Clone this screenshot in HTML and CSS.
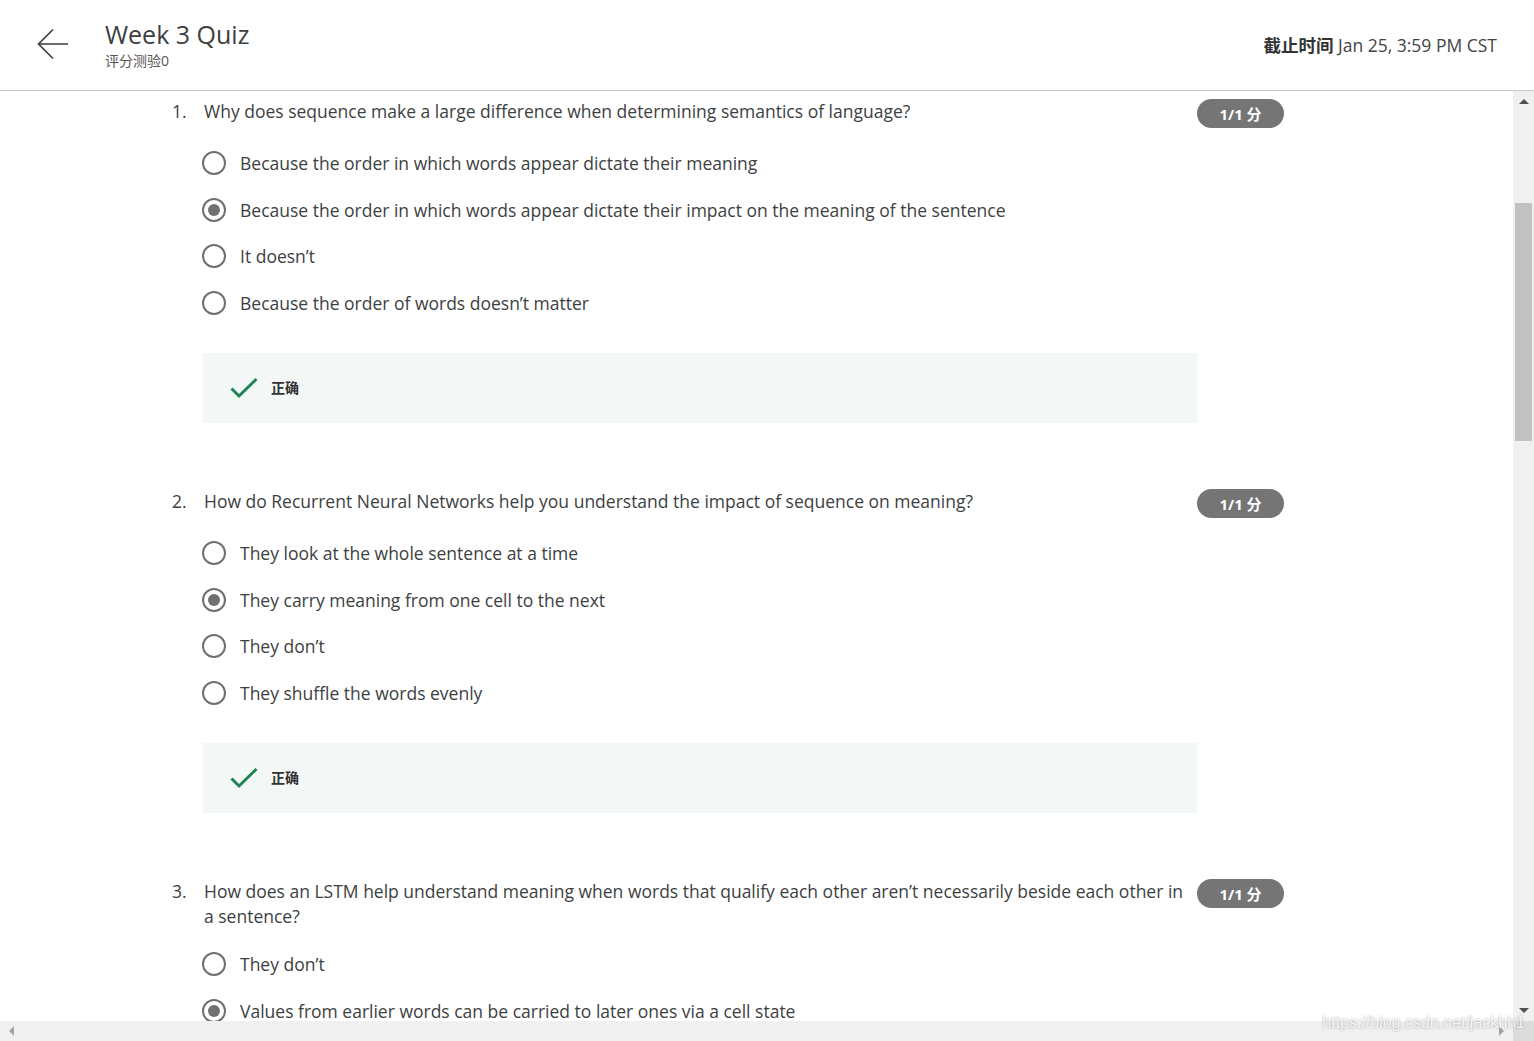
FILE: index.html
```html
<!DOCTYPE html>
<html lang="zh">
<head>
<meta charset="utf-8">
<title>Week 3 Quiz</title>
<link rel="stylesheet" href="styles.css">
</head>
<body>
<div class="app">
  <header class="topbar">
    <div class="back">
      <svg width="32" height="32" viewBox="0 0 32 32"><path d="M31 16H2M16 1.5L1.5 16L16 30.5" fill="none" stroke="#3c3c3c" stroke-width="1.6"/></svg>
    </div>
    <div class="titles">
      <div class="title">Week 3 Quiz</div>
      <div class="subtitle">评分测验0</div>
    </div>
    <div class="deadline"><b>截止时间</b> Jan 25, 3:59 PM CST</div>
  </header>
  <div class="body-row">
    <main class="content">
      <section class="question">
        <div class="q-row">
          <span class="q-num">1.</span>
          <div class="q-text">Why does sequence make a large difference when determining semantics of language?</div>
          <span class="badge">1/1 分</span>
        </div>
        <ul class="options">
          <li><span class="radio"></span>Because the order in which words appear dictate their meaning</li>
          <li><span class="radio on"></span>Because the order in which words appear dictate their impact on the meaning of the sentence</li>
          <li><span class="radio"></span>It doesn’t</li>
          <li><span class="radio"></span>Because the order of words doesn’t matter</li>
        </ul>
        <div class="feedback">
          <svg class="check" width="28" height="22" viewBox="0 0 28 22"><path d="M1.5 11.5L9 19L26.5 2" fill="none" stroke="#1f8354" stroke-width="3"/></svg>
          <span>正确</span>
        </div>
      </section>
      <section class="question">
        <div class="q-row">
          <span class="q-num">2.</span>
          <div class="q-text">How do Recurrent Neural Networks help you understand the impact of sequence on meaning?</div>
          <span class="badge">1/1 分</span>
        </div>
        <ul class="options">
          <li><span class="radio"></span>They look at the whole sentence at a time</li>
          <li><span class="radio on"></span>They carry meaning from one cell to the next</li>
          <li><span class="radio"></span>They don’t</li>
          <li><span class="radio"></span>They shuffle the words evenly</li>
        </ul>
        <div class="feedback">
          <svg class="check" width="28" height="22" viewBox="0 0 28 22"><path d="M1.5 11.5L9 19L26.5 2" fill="none" stroke="#1f8354" stroke-width="3"/></svg>
          <span>正确</span>
        </div>
      </section>
      <section class="question">
        <div class="q-row">
          <span class="q-num">3.</span>
          <div class="q-text">How does an LSTM help understand meaning when words that qualify each other aren’t necessarily beside each other in a sentence?</div>
          <span class="badge">1/1 分</span>
        </div>
        <ul class="options">
          <li><span class="radio"></span>They don’t</li>
          <li><span class="radio on"></span>Values from earlier words can be carried to later ones via a cell state</li>
        </ul>
      </section>
    </main>
    <div class="vscroll">
      <span class="arrow up"></span>
      <div class="vtrack"><div class="vthumb"></div></div>
      <span class="arrow down"></span>
    </div>
  </div>
  <div class="hscroll-row">
    <div class="hscroll">
      <span class="arrow left"></span>
      <span class="arrow right"></span>
    </div>
    <div class="corner"></div>
  </div>
  <div class="watermark">https://blog.csdn.net/jackhh1</div>
</div>
</body>
</html>
```
FILE: styles.css
```css
html, body {
  margin: 0;
  padding: 0;
  height: 100%;
  overflow: hidden;
  background: #fff;
}
body {
  font-family: "Open Sans", "Noto Sans CJK SC", sans-serif;
  color: #3d3f41;
}
.app {
  position: relative;
  width: 1534px;
  height: 1041px;
  display: flex;
  flex-direction: column;
}
.topbar {
  flex: none;
  border-bottom: 1px solid #c8c8c8;
  display: flex;
  align-items: center;
  box-sizing: border-box;
  height: 91px;
}
.back {
  width: 32px;
  height: 32px;
  margin-left: 37px;
  margin-top: -2px;
}
.back svg { display: block; }
.titles {
  margin-left: 36px;
  display: flex;
  flex-direction: column;
}
.title {
  font-size: 25px;
  line-height: 30px;
  color: #3d3f41;
}
.subtitle {
  font-size: 14px;
  line-height: 20px;
  color: #555;
  margin-top: 2px;
}
.deadline {
  margin-left: auto;
  margin-right: 37px;
  margin-top: -2px;
  font-size: 17.5px;
  color: #444;
}
.deadline b {
  font-weight: 700;
  color: #333;
}
.body-row {
  flex: 1;
  display: flex;
  min-height: 0;
}
.content {
  flex: 1;
  overflow: hidden;
  padding: 8px 0 0 172px;
  box-sizing: border-box;
}
.question {
  width: 1112px;
  margin-bottom: 66px;
}
.q-row {
  display: flex;
  align-items: flex-start;
}
.q-num {
  width: 32px;
  flex: none;
  font-size: 17.5px;
  line-height: 25px;
}
.q-text {
  flex: 1;
  font-size: 17.5px;
  line-height: 25px;
  padding-right: 12px;
}
.badge {
  flex: none;
  width: 87px;
  height: 29px;
  border-radius: 15px;
  background: #757575;
  color: #fff;
  font-size: 15px;
  font-weight: 700;
  display: flex;
  align-items: center;
  justify-content: center;
}
.options {
  list-style: none;
  margin: 12px 0 0 0;
  padding: 0 0 0 30px;
}
.options li {
  height: 46.5px;
  display: flex;
  align-items: center;
  font-size: 17.5px;
  color: #3d3f41;
}
.radio {
  width: 24px;
  height: 24px;
  border: 2px solid #707070;
  border-radius: 50%;
  box-sizing: border-box;
  margin-right: 14px;
  display: flex;
  align-items: center;
  justify-content: center;
  flex: none;
}
.radio.on::after {
  content: "";
  width: 12px;
  height: 12px;
  border-radius: 50%;
  background: #707070;
}
.feedback {
  margin: 27px 0 0 31px;
  width: 994px;
  height: 70px;
  background: #f3f8f6;
  display: flex;
  align-items: center;
}
.check {
  margin-left: 27px;
  margin-right: 13px;
  margin-top: -1px;
}
.feedback span {
  font-size: 14px;
  font-weight: 700;
  color: #333;
  font-family: "Noto Sans CJK SC", sans-serif;
  margin-top: -2px;
}
.vscroll {
  width: 21px;
  flex: none;
  background: #f0f0f0;
  display: flex;
  flex-direction: column;
  align-items: center;
}
.vtrack {
  flex: 1;
  width: 100%;
}
.vthumb {
  margin: 99px 2px 0 2px;
  height: 238px;
  background: #c1c1c1;
}
.arrow {
  width: 0;
  height: 0;
  flex: none;
}
.arrow.up {
  margin-top: 8px;
  border-left: 5px solid transparent;
  border-right: 5px solid transparent;
  border-bottom: 5px solid #505050;
}
.arrow.down {
  margin-bottom: 8px;
  border-left: 5px solid transparent;
  border-right: 5px solid transparent;
  border-top: 5px solid #505050;
}
.hscroll-row {
  height: 20px;
  flex: none;
  display: flex;
}
.hscroll {
  flex: 1;
  background: #f0f0f0;
  display: flex;
  align-items: center;
  justify-content: space-between;
  padding: 0 9px;
}
.arrow.left {
  border-top: 5px solid transparent;
  border-bottom: 5px solid transparent;
  border-right: 5px solid #a3a3a3;
}
.arrow.right {
  border-top: 5px solid transparent;
  border-bottom: 5px solid transparent;
  border-left: 5px solid #a3a3a3;
}
.corner {
  width: 21px;
  background: #dcdcdc;
}
.watermark {
  position: absolute;
  right: 9px;
  bottom: 9px;
  font-family: "Liberation Sans", Arial, sans-serif;
  font-size: 16px;
  color: rgba(255, 255, 255, 0.9);
  text-shadow: 0 0 2px rgba(90, 90, 90, 0.6);
}
```
